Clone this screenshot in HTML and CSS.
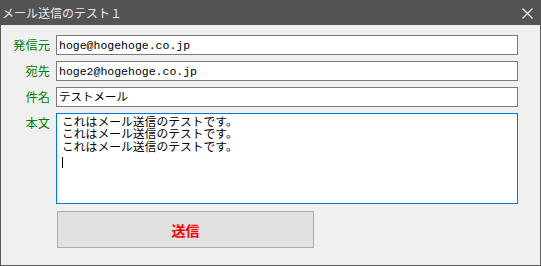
FILE: index.html
```html
<!DOCTYPE html>
<html lang="ja">
<head>
  <meta charset="UTF-8">
  <title>メール送信のテスト１</title>
  <link rel="stylesheet" href="styles.css">
</head>
<body>
  <div class="window">
    <div class="titlebar">
      <span class="title">メール送信のテスト１</span>
      <svg class="close" width="11" height="11" viewBox="0 0 11 11">
        <path d="M0.5 0.5 L10.5 10.5 M10.5 0.5 L0.5 10.5" stroke="#f2f2f2" stroke-width="1.2" fill="none"/>
      </svg>
    </div>

    <div class="form">
      <label class="label">発信元</label>
      <div class="field">hoge@hogehoge.co.jp</div>

      <label class="label">宛先</label>
      <div class="field">hoge2@hogehoge.co.jp</div>

      <label class="label">件名</label>
      <div class="field">テストメール</div>

      <label class="label">本文</label>
      <div class="body-text">
        <div>これはメール送信のテストです。</div>
        <div>これはメール送信のテストです。</div>
        <div>これはメール送信のテストです。</div>
        <div><span class="caret"></span></div>
      </div>

      <div></div>
      <div class="actions">
        <button class="send">送信</button>
      </div>
    </div>
  </div>
</body>
</html>
```

FILE: styles.css
```css
body {
  margin: 0;
  background: #f0f0f0;
  font-family: "Noto Sans CJK JP", "Noto Sans", sans-serif;
}

.window {
  width: 541px;
  height: 266px;
  box-sizing: border-box;
  background: #f0f0f0;
  border-left: 1px solid #5a5a5a;
  border-right: 1px solid #5a5a5a;
  border-bottom: 1px solid #5a5a5a;
}

.titlebar {
  height: 25px;
  background: #545454;
  display: flex;
  align-items: center;
  justify-content: space-between;
  padding: 0 8px 0 2px;
  margin-left: -1px;
  margin-right: -1px;
}

.title {
  color: #e6e6e6;
  font-size: 12px;
  line-height: 12px;
  padding-top: 1px;
}

.close {
  margin-top: 1px;
}

.form {
  display: grid;
  grid-template-columns: 55px 462px;
  row-gap: 6px;
  margin-top: 10px;
}

.label {
  color: #008000;
  font-size: 12.3px;
  line-height: 14px;
  text-align: right;
  padding-right: 6px;
  padding-top: 3px;
}

.field {
  height: 20px;
  box-sizing: border-box;
  background: #fff;
  border: 1px solid #7a7a7a;
  padding: 0 2px;
  font-family: "Liberation Mono", "Noto Sans CJK JP", monospace;
  font-size: 11.5px;
  line-height: 19px;
  color: #000;
}

.body-text {
  height: 91px;
  box-sizing: border-box;
  background: #fff;
  border: 1px solid #0078d7;
  padding: 3px 5px;
  font-family: "Liberation Mono", "Noto Sans CJK JP", monospace;
  font-size: 11.8px;
  line-height: 12.3px;
  color: #000;
}

.caret {
  display: inline-block;
  width: 1px;
  height: 11px;
  background: #000;
  vertical-align: top;
  margin-top: 3px;
}

.actions {
  padding-top: 1px;
  padding-left: 1px;
}

.send {
  width: 257px;
  height: 37px;
  background: #e1e1e1;
  border: 1px solid #adadad;
  color: #ff0000;
  font-family: "Noto Sans CJK JP", sans-serif;
  font-weight: bold;
  font-size: 14px;
  padding: 0;
}
```
